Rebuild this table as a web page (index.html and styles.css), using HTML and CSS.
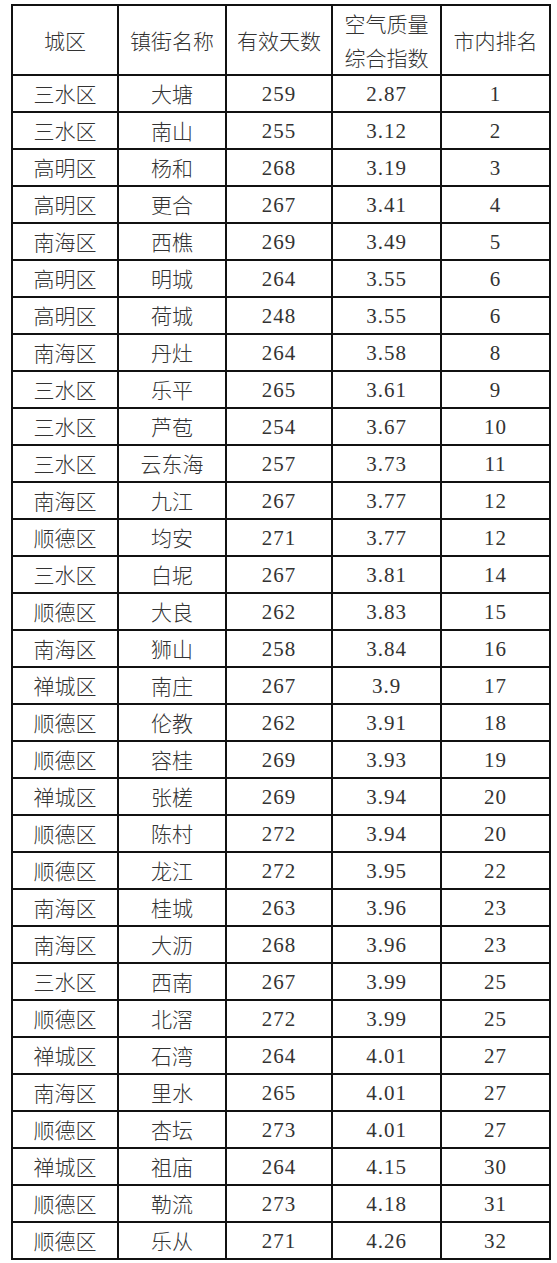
FILE: index.html
```html
<!DOCTYPE html>
<html lang="zh-CN">
<head>
<meta charset="utf-8">
<title>空气质量综合指数排名</title>
<link rel="stylesheet" href="styles.css">
</head>
<body>
<table class="rank">
<colgroup>
<col class="c1"><col class="c2"><col class="c3"><col class="c4"><col class="c5">
</colgroup>
<thead>
<tr class="head"><th>城区</th><th>镇街名称</th><th>有效天数</th><th>空气质量<br>综合指数</th><th>市内排名</th></tr>
</thead>
<tbody>
<tr><td>三水区</td><td>大塘</td><td class="n">259</td><td class="n">2.87</td><td class="n">1</td></tr>
<tr><td>三水区</td><td>南山</td><td class="n">255</td><td class="n">3.12</td><td class="n">2</td></tr>
<tr><td>高明区</td><td>杨和</td><td class="n">268</td><td class="n">3.19</td><td class="n">3</td></tr>
<tr><td>高明区</td><td>更合</td><td class="n">267</td><td class="n">3.41</td><td class="n">4</td></tr>
<tr><td>南海区</td><td>西樵</td><td class="n">269</td><td class="n">3.49</td><td class="n">5</td></tr>
<tr><td>高明区</td><td>明城</td><td class="n">264</td><td class="n">3.55</td><td class="n">6</td></tr>
<tr><td>高明区</td><td>荷城</td><td class="n">248</td><td class="n">3.55</td><td class="n">6</td></tr>
<tr><td>南海区</td><td>丹灶</td><td class="n">264</td><td class="n">3.58</td><td class="n">8</td></tr>
<tr><td>三水区</td><td>乐平</td><td class="n">265</td><td class="n">3.61</td><td class="n">9</td></tr>
<tr><td>三水区</td><td>芦苞</td><td class="n">254</td><td class="n">3.67</td><td class="n">10</td></tr>
<tr><td>三水区</td><td>云东海</td><td class="n">257</td><td class="n">3.73</td><td class="n">11</td></tr>
<tr><td>南海区</td><td>九江</td><td class="n">267</td><td class="n">3.77</td><td class="n">12</td></tr>
<tr><td>顺德区</td><td>均安</td><td class="n">271</td><td class="n">3.77</td><td class="n">12</td></tr>
<tr><td>三水区</td><td>白坭</td><td class="n">267</td><td class="n">3.81</td><td class="n">14</td></tr>
<tr><td>顺德区</td><td>大良</td><td class="n">262</td><td class="n">3.83</td><td class="n">15</td></tr>
<tr><td>南海区</td><td>狮山</td><td class="n">258</td><td class="n">3.84</td><td class="n">16</td></tr>
<tr><td>禅城区</td><td>南庄</td><td class="n">267</td><td class="n">3.9</td><td class="n">17</td></tr>
<tr><td>顺德区</td><td>伦教</td><td class="n">262</td><td class="n">3.91</td><td class="n">18</td></tr>
<tr><td>顺德区</td><td>容桂</td><td class="n">269</td><td class="n">3.93</td><td class="n">19</td></tr>
<tr><td>禅城区</td><td>张槎</td><td class="n">269</td><td class="n">3.94</td><td class="n">20</td></tr>
<tr><td>顺德区</td><td>陈村</td><td class="n">272</td><td class="n">3.94</td><td class="n">20</td></tr>
<tr><td>顺德区</td><td>龙江</td><td class="n">272</td><td class="n">3.95</td><td class="n">22</td></tr>
<tr><td>南海区</td><td>桂城</td><td class="n">263</td><td class="n">3.96</td><td class="n">23</td></tr>
<tr><td>南海区</td><td>大沥</td><td class="n">268</td><td class="n">3.96</td><td class="n">23</td></tr>
<tr><td>三水区</td><td>西南</td><td class="n">267</td><td class="n">3.99</td><td class="n">25</td></tr>
<tr><td>顺德区</td><td>北滘</td><td class="n">272</td><td class="n">3.99</td><td class="n">25</td></tr>
<tr><td>禅城区</td><td>石湾</td><td class="n">264</td><td class="n">4.01</td><td class="n">27</td></tr>
<tr><td>南海区</td><td>里水</td><td class="n">265</td><td class="n">4.01</td><td class="n">27</td></tr>
<tr><td>顺德区</td><td>杏坛</td><td class="n">273</td><td class="n">4.01</td><td class="n">27</td></tr>
<tr><td>禅城区</td><td>祖庙</td><td class="n">264</td><td class="n">4.15</td><td class="n">30</td></tr>
<tr><td>顺德区</td><td>勒流</td><td class="n">273</td><td class="n">4.18</td><td class="n">31</td></tr>
<tr><td>顺德区</td><td>乐从</td><td class="n">271</td><td class="n">4.26</td><td class="n">32</td></tr>
</tbody>
</table>
</body>
</html>
```
FILE: styles.css
```css
html, body {
  margin: 0;
  padding: 0;
  background: #ffffff;
}
body {
  padding: 4px 0 0 11px;
  font-family: "Noto Sans CJK SC", "Noto Sans", sans-serif;
  color: #333333;
}
.rank {
  border-collapse: collapse;
  table-layout: fixed;
  width: 540px;
}
.c1 { width: 106px; }
.c2 { width: 108px; }
.c3 { width: 106px; }
.c4 { width: 109px; }
.c5 { width: 109px; }
.rank th,
.rank td {
  border: 2px solid #111111;
  padding: 0;
  text-align: center;
  vertical-align: middle;
  font-size: 21px;
  font-weight: 300;
  line-height: 26px;
}
.rank .head th {
  height: 68px;
  line-height: 34px;
}
.rank tbody td {
  height: 33px;
  padding: 0 0 2px 0;
}
.rank tbody td.n {
  font-family: "Liberation Serif", "DejaVu Serif", serif;
  font-size: 21px;
  font-weight: 400;
  letter-spacing: 1px;
  padding: 1px 0;
}
```
